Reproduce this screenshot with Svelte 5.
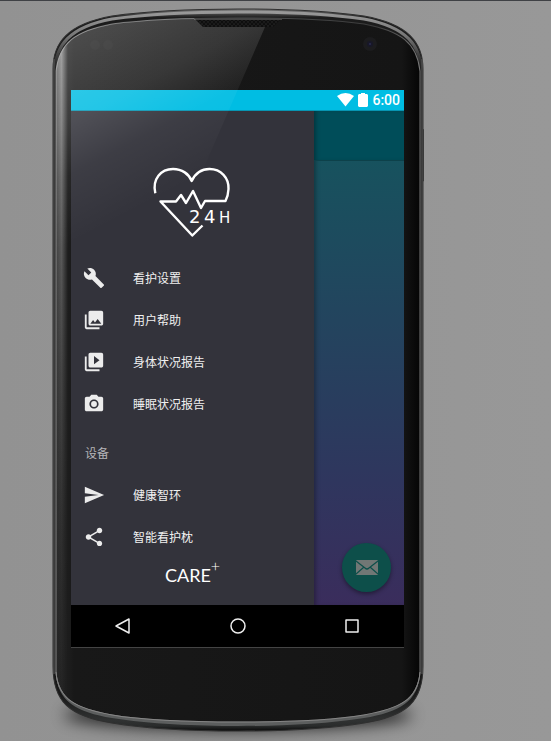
<script>
  const care = [
    { label: '看护设置', path: 'M22.7 19l-9.1-9.1c.9-2.3.4-5-1.5-6.9-2-2-5-2.4-7.4-1.3L9 6 6 9 1.6 4.7C.4 7.1.9 10.1 2.9 12.1c1.9 1.9 4.6 2.4 6.9 1.5l9.1 9.1c.4.4 1 .4 1.4 0l2.3-2.3c.5-.4.5-1.1.1-1.4z' },
    { label: '用户帮助', path: 'M22 16V4c0-1.1-.9-2-2-2H8c-1.1 0-2 .9-2 2v12c0 1.1.9 2 2 2h12c1.1 0 2-.9 2-2zm-11-4l2.03 2.71L16 11l4 5H8l3-4zM2 6v14c0 1.1.9 2 2 2h14v-2H4V6H2z' },
    { label: '身体状况报告', path: 'M4 6H2v14c0 1.1.9 2 2 2h14v-2H4V6zm16-4H8c-1.1 0-2 .9-2 2v12c0 1.1.9 2 2 2h12c1.1 0 2-.9 2-2V4c0-1.1-.9-2-2-2zm-8 12.5v-9l6 4.5-6 4.5z' },
    { label: '睡眠状况报告', path: 'M12 8.8a3.2 3.2 0 1 0 0 6.4 3.2 3.2 0 0 0 0-6.4zM9 2L7.17 4H4c-1.1 0-2 .9-2 2v12c0 1.1.9 2 2 2h16c1.1 0 2-.9 2-2V6c0-1.1-.9-2-2-2h-3.17L15 2H9zm3 15c-2.76 0-5-2.24-5-5s2.24-5 5-5 5 2.24 5 5-2.24 5-5 5z' }
  ];
  const devices = [
    { label: '健康智环', path: 'M2.01 21L23 12 2.01 3 2 10l15 2-15 2z' },
    { label: '智能看护枕', path: 'M18 16.08c-.76 0-1.44.3-1.96.77L8.91 12.7c.05-.23.09-.46.09-.7s-.04-.47-.09-.7l7.05-4.11c.54.5 1.25.81 2.04.81 1.66 0 3-1.34 3-3s-1.34-3-3-3-3 1.34-3 3c0 .24.04.47.09.7L8.04 9.81C7.5 9.31 6.79 9 6 9c-1.66 0-3 1.34-3 3s1.34 3 3 3c.79 0 1.5-.31 2.04-.81l7.12 4.16c-.05.21-.08.43-.08.65 0 1.61 1.31 2.92 2.92 2.92 1.61 0 2.92-1.31 2.92-2.92s-1.31-2.92-2.92-2.92z' }
  ];
</script>

{#snippet rows(items)}
  <ul>
    {#each items as item}
      <li>
        <a href="#top">
          <svg class="icon" viewBox="0 0 24 24" aria-hidden="true"><path d={item.path} /></svg>
          <span>{item.label}</span>
        </a>
      </li>
    {/each}
  </ul>
{/snippet}

<main class="stage">
  <div class="phone">
    <svg class="shell" viewBox="0 0 370 722" preserveAspectRatio="none" aria-hidden="true">
      <defs>
        <linearGradient id="rim" x1="0" y1="0" x2="0" y2="1">
          <stop offset="0" stop-color="#777" />
          <stop offset=".012" stop-color="#1c1c1c" />
          <stop offset=".3" stop-color="#181818" />
          <stop offset=".95" stop-color="#191919" />
          <stop offset=".985" stop-color="#303232" />
          <stop offset=".993" stop-color="#2a2c2c" />
          <stop offset="1" stop-color="#0a0a0a" />
        </linearGradient>
        <linearGradient id="face" x1="0" y1="0" x2="1" y2="0">
          <stop offset="0" stop-color="#222" />
          <stop offset=".04" stop-color="#1b1b1b" />
          <stop offset=".05" stop-color="#181818" />
          <stop offset=".95" stop-color="#151515" />
          <stop offset="1" stop-color="#050505" />
        </linearGradient>
        <linearGradient id="side" x1="0" y1="0" x2="0" y2="1">
          <stop offset="0" stop-color="#bbb" stop-opacity=".75" />
          <stop offset=".3" stop-color="#999" stop-opacity=".55" />
          <stop offset=".7" stop-color="#777" stop-opacity=".25" />
          <stop offset="1" stop-color="#555" stop-opacity=".1" />
        </linearGradient>
        <linearGradient id="across" x1="0" y1="0" x2="1" y2="0">
          <stop offset="0" stop-color="#fff" stop-opacity=".4" />
          <stop offset=".5" stop-color="#fff" stop-opacity=".9" />
          <stop offset=".8" stop-color="#fff" stop-opacity=".35" />
          <stop offset="1" stop-color="#fff" stop-opacity="0" />
        </linearGradient>
        <linearGradient id="edge" x1="0" y1="0" x2="1" y2="0">
          <stop offset="0" stop-color="#8a8a8a" />
          <stop offset=".12" stop-color="#777" />
          <stop offset=".5" stop-color="#4c4e4f" />
          <stop offset=".88" stop-color="#3c3c3c" />
          <stop offset="1" stop-color="#777" />
        </linearGradient>
        <linearGradient id="band" x1="0" y1="0" x2="0" y2="1">
          <stop offset="0" stop-color="#999" />
          <stop offset=".4" stop-color="#777" />
          <stop offset="1" stop-color="#666" stop-opacity="0" />
        </linearGradient>
        <mask id="sideMask"><rect x="2" y="20" width="13" height="680" fill="url(#across)" /></mask>
        <filter id="soft" x="-20%" y="-200%" width="140%" height="500%"><feGaussianBlur stdDeviation="8" /></filter>
        <pattern id="mesh" width="4" height="4" patternUnits="userSpaceOnUse">
          <rect width="4" height="4" fill="#1c1c1c" /><circle cx="1" cy="1" r="1" fill="#090909" /><circle cx="3" cy="3" r="1" fill="#090909" />
        </pattern>
      </defs>
      <ellipse cx="185" cy="705" rx="174" ry="15" fill="#000" opacity=".75" filter="url(#soft)" />
      <path d="M368 120h3v52h-3z" fill="#444" />
      <path d="M0 60C0 34 14 15 59 7C95 2 145 0 185 0S275 2 311 7C356 15 370 34 370 60V656C370 692 354 706 311 713C275 719 225 721 185 721S95 719 59 713C16 706 0 692 0 656Z" fill="url(#rim)" stroke="#303030" stroke-width="1" />
      <path d="M2 62C2 37 16 18 59 10C95 5 145 3 185 3S275 5 311 10C354 18 368 37 368 62" fill="none" stroke="url(#band)" stroke-width="3" />
      <path d="M3 62C6 34 22 22 59 15C95 10 145 9 185 9S275 10 311 15C348 22 364 34 367 62V662C365 690 346 699 311 705C275 711 225 712 185 712S95 711 59 705C24 699 5 690 3 662Z" fill="url(#face)" stroke="url(#edge)" stroke-width="1" />
      <path d="M3 662C5 690 24 699 59 705C95 711 145 712 185 712S275 711 311 705C346 699 365 690 367 662C366 692 346 702 311 708C275 714 225 716 185 716S95 714 59 708C24 702 4 692 3 662Z" fill="#5c5e5e" />
      <path d="M3 662C5 690 24 699 59 705C95 711 145 712 185 712S275 711 311 705C346 699 365 690 367 662" fill="none" stroke="#858585" stroke-width="1" />
      <path d="M3 62Q6 42 15 34V692Q6 684 3 662Z" fill="url(#side)" mask="url(#sideMask)" />
      <path d="M369 50V664M1 50V664" stroke="#5f5f5f" />
      <path d="M141 9H229L220 18H150Z" fill="url(#mesh)" />
      <path d="M141 10H229" stroke="#444" stroke-width="2" />
      <circle cx="42" cy="36" r="5" fill="#1c1c1c" /><circle cx="55" cy="36" r="5" fill="#1c1c1c" />
      <circle cx="317" cy="35" r="7" fill="#1c1c1e" /><circle cx="317" cy="35" r="3" fill="#181828" /><circle cx="317" cy="35" r="1" fill="#2a2a50" />
    </svg>

    <section class="screen">
      <header class="status">
        <svg width="17" height="14" viewBox="0 0 17 14" aria-hidden="true"><path d="M0 3Q8.500-3 17 3L8.500 13.500Z" fill="#fff" /></svg>
        <svg width="10" height="14" viewBox="0 0 10 14" aria-hidden="true"><path d="M3 0h4v1h2l1 1v11l-1 1H1l-1-1V2l1-1h2z" fill="#fff" /></svg>
        <time>6:00</time>
      </header>

      <div class="body">
        <nav class="drawer">
          <div class="brand">
            <svg width="84" height="76" viewBox="0 0 84 76" role="img" aria-label="24H">
              <path d="M4.300 28.300C1 14 10 4 22 4C31 4 38 9 40.700 16C44 9 50 4 58.500 4C70 4 78 13 77.500 24C77.300 29 76 33 74.500 36H54L50 43L42 26L35 38L30 30L25 36.500H9.500L41.300 70.500L51.500 60.500" fill="none" stroke="#fff" stroke-width="2.400" stroke-linejoin="round" />
              <text y="58" fill="#fff" font-family="DejaVu Sans, sans-serif"><tspan x="38" font-size="18">2</tspan><tspan x="53" font-size="18">4</tspan><tspan x="68" font-size="15">H</tspan></text>
            </svg>
          </div>
          {@render rows(care)}
          <h2>设备</h2>
          {@render rows(devices)}
          <p class="care">CARE<sup>+</sup></p>
        </nav>
        <div class="content">
          <div class="appbar"></div>
          <button class="fab" aria-label="Mail">
            <svg width="22" height="16" viewBox="0 0 22 16" aria-hidden="true">
              <rect width="22" height="15" rx="1" fill="#717775" />
              <path d="M0 1L9 8Q11 10 13 8L22 1M0 14L8 7M22 14L14 7" fill="none" stroke="#0d4f4a" stroke-width="1.200" />
            </svg>
          </button>
        </div>
      </div>

      <footer class="keys">
        <button aria-label="Back"><svg width="18" height="18" viewBox="0 0 18 18"><path d="M15 2V16L2 9Z" /></svg></button>
        <button aria-label="Home"><svg width="18" height="18" viewBox="0 0 18 18"><circle cx="9" cy="9" r="7" /></svg></button>
        <button aria-label="Recents"><svg width="18" height="18" viewBox="0 0 18 18"><rect x="3" y="3" width="12" height="12" /></svg></button>
      </footer>
    </section>

    <svg class="glare" viewBox="0 0 370 722" preserveAspectRatio="none" aria-hidden="true">
      <defs>
        <linearGradient id="shine" gradientUnits="userSpaceOnUse" x1="40" y1="20" x2="150" y2="230">
          <stop offset="0" stop-color="#fff" stop-opacity=".22" />
          <stop offset=".3" stop-color="#fff" stop-opacity=".14" />
          <stop offset=".5" stop-color="#fff" stop-opacity=".05" />
          <stop offset=".76" stop-color="#fff" stop-opacity="0" />
        </linearGradient>
      </defs>
      <path d="M3 62C6 34 22 22 59 15C90 11 120 9 141 9L150 18H212L111 250H3Z" fill="url(#shine)" />
    </svg>
  </div>
</main>

<style>
  :global(body) { margin: 0; background: #969696; }
  * { box-sizing: border-box; }
  .stage {
    min-height: 100vh;
    padding: 8px 53px 10px;
    border-top: 1px solid #3f4145;
    overflow: hidden;
    font-family: "Noto Sans CJK SC", sans-serif;
    background: linear-gradient(90deg, #929292, #989898);
  }
  .phone { position: relative; max-width: 370px; padding: 81px 19px 84px 18px; }
  .shell, .glare { position: absolute; inset: 0; width: 100%; height: 100%; overflow: visible; }
  .glare { pointer-events: none; }
  .screen { position: relative; border-bottom: 1px solid #444; background: #000; }
  .status {
    display: flex; align-items: center; justify-content: flex-end; gap: 4px;
    height: 21px; padding-right: 4px; background: #00bde3; color: #fff;
    font: 500 14px/20px Roboto, sans-serif;
    border-bottom: 1px solid #0795b2;
  }
  .body { display: flex; }
  .drawer { flex: 0 0 73%; background: #33333b; color: #f0f0f0; }
  .brand { display: flex; justify-content: center; height: 146px; padding-top: 54px; }
  ul { list-style: none; margin: 0; padding: 0; }
  li a {
    display: flex; align-items: center; gap: 28px; height: 42px; padding-left: 12px;
    color: #f0f0f0; text-decoration: none; font-size: 12px; line-height: 18px;
  }
  .icon { width: 22px; height: 22px; fill: #ececec; }
  h2 {
    height: 49px; margin: 0; padding: 19px 14px 0;
    font-size: 12px; line-height: 18px; font-weight: 400; color: #b5b5b8;
  }
  .care {
    height: 47px; margin: 0; padding-top: 4px; text-align: center;
    font: 400 18px/26px Lato, sans-serif; color: #fff;
  }
  sup { font-size: 16px; line-height: 0; font-weight: 300; vertical-align: 10px; }
  .content {
    flex: 1; display: flex; flex-direction: column; justify-content: space-between; align-items: flex-end;
    background: linear-gradient(#17525e 10%, #2f365e 75%, #3a2d5c);
    box-shadow: inset 4px 0 4px -2px rgba(0, 0, 0, .3);
  }
  .appbar {
    width: 100%; height: 50px; background: #004d59; border-bottom: 1px solid #0d414a;
    box-shadow: inset 4px 0 4px -2px rgba(0, 0, 0, .3);
  }
  button { padding: 0; border: 0; background: none; display: grid; place-items: center; }
  .fab {
    width: 49px; height: 49px; margin: 0 13px 13px 0; border-radius: 50%;
    background: #0d4f4a; box-shadow: 0 2px 4px rgba(0, 0, 0, .4);
  }
  .keys { display: flex; justify-content: space-between; height: 42px; padding: 0 31px; background: #000; }
  .keys button { width: 42px; }
  .keys svg { fill: none; stroke: #eee; stroke-width: 1.500; stroke-linejoin: round; }
</style>
